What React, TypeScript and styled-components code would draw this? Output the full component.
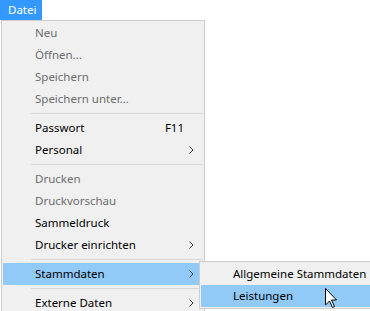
import { FC, ReactElement } from "react";
import styled, { createGlobalStyle } from "styled-components";

const GlobalStyle = createGlobalStyle`
  html, body {
    margin: 0;
    background: #ffffff;
    overflow: hidden;
  }
  body {
    font-family: "Noto Sans", "Liberation Sans", sans-serif;
    font-size: 11.5px;
  }
`;

const Page = styled.div`
  position: relative;
  width: 370px;
  height: 311px;
  overflow: hidden;
`;

const MenuBar = styled.div`
  display: flex;
  height: 20px;
  background: #ffffff;
`;

const MenuTitle = styled.div<{ $open?: boolean }>`
  display: flex;
  align-items: center;
  width: 42px;
  box-sizing: border-box;
  padding-left: 8px;
  padding-bottom: 1px;
  color: ${(p) => (p.$open ? "#ffffff" : "#000000")};
  background: ${(p) => (p.$open ? "#3399ff" : "transparent")};
`;

const Dropdown = styled.div`
  box-sizing: border-box;
  width: 204px;
  margin-left: 1px;
  padding: 1px;
  background: #f0f0f0;
  border: 1px solid #cccccc;
  display: flex;
  flex-direction: column;
`;

const SubMenu = styled.div`
  position: absolute;
  left: 196px;
  top: -2px;
  box-sizing: border-box;
  width: 180px;
  padding: 1px;
  background: #f0f0f0;
  border: 1px solid #cccccc;
  display: flex;
  flex-direction: column;
  z-index: 2;
`;

const Row = styled.div<{ $disabled?: boolean; $active?: boolean }>`
  position: relative;
  display: grid;
  grid-template-columns: 1fr auto 19px;
  align-items: center;
  box-sizing: border-box;
  height: 22px;
  padding-left: 32px;
  padding-bottom: 1px;
  color: ${(p) => (p.$disabled ? "#6d6d6d" : "#000000")};
  background: ${(p) => (p.$active ? "#91c9f7" : "transparent")};
  white-space: nowrap;
`;

const Shortcut = styled.span`
  padding-right: 0;
`;

const ArrowCell = styled.span`
  display: flex;
  align-items: center;
  padding-left: 5px;
  padding-top: 1px;
`;

const Separator = styled.div`
  height: 7px;
  display: flex;
  align-items: center;
  padding-left: 28px;

  &::after {
    content: "";
    flex: 1;
    height: 1px;
    background: #d7d7d7;
  }
`;

const Cursor = styled.svg`
  position: absolute;
  left: 325px;
  top: 288px;
  z-index: 3;
`;

const Chevron: FC = () => (
  <svg width="5" height="8" viewBox="0 0 5 8">
    <polyline
      points="0.5,0.5 4,4 0.5,7.5"
      fill="none"
      stroke="#3c3c3c"
      strokeWidth="1"
    />
  </svg>
);

type Item = {
  label: string;
  disabled?: boolean;
  shortcut?: string;
  sub?: boolean;
  active?: boolean;
};

type Entry = Item | "sep";

const entries: Entry[] = [
  { label: "Neu", disabled: true },
  { label: "Öffnen...", disabled: true },
  { label: "Speichern", disabled: true },
  { label: "Speichern unter...", disabled: true },
  "sep",
  { label: "Passwort", shortcut: "F11" },
  { label: "Personal", sub: true },
  "sep",
  { label: "Drucken", disabled: true },
  { label: "Druckvorschau", disabled: true },
  { label: "Sammeldruck" },
  { label: "Drucker einrichten", sub: true },
  "sep",
  { label: "Stammdaten", sub: true, active: true },
  "sep",
  { label: "Externe Daten", sub: true },
];

const subEntries: Item[] = [
  { label: "Allgemeine Stammdaten" },
  { label: "Leistungen", active: true },
];

const MenuRow: FC<{ item: Item; children?: ReactElement }> = ({
  item,
  children,
}) => (
  <Row $disabled={item.disabled} $active={item.active}>
    <span>{item.label}</span>
    <Shortcut>{item.shortcut}</Shortcut>
    <ArrowCell>{item.sub && <Chevron />}</ArrowCell>
    {children}
  </Row>
);

export default function App(): ReactElement {
  return (
    <Page>
      <GlobalStyle />
      <MenuBar>
        <MenuTitle $open>Datei</MenuTitle>
      </MenuBar>
      <Dropdown>
        {entries.map((e, i) =>
          e === "sep" ? (
            <Separator key={i} />
          ) : (
            <MenuRow key={i} item={e}>
              {e.active ? (
                <SubMenu>
                  {subEntries.map((s) => (
                    <MenuRow key={s.label} item={s} />
                  ))}
                </SubMenu>
              ) : undefined}
            </MenuRow>
          )
        )}
      </Dropdown>
      <Cursor width="13" height="21" viewBox="0 0 13 21">
        <polygon
          points="0.5,0.5 0.5,17 4.5,13 7.5,19.5 9.5,18.5 6.5,12 11.5,12"
          fill="#ffffff"
          stroke="#000000"
          strokeWidth="1"
          strokeLinejoin="miter"
        />
      </Cursor>
    </Page>
  );
}
